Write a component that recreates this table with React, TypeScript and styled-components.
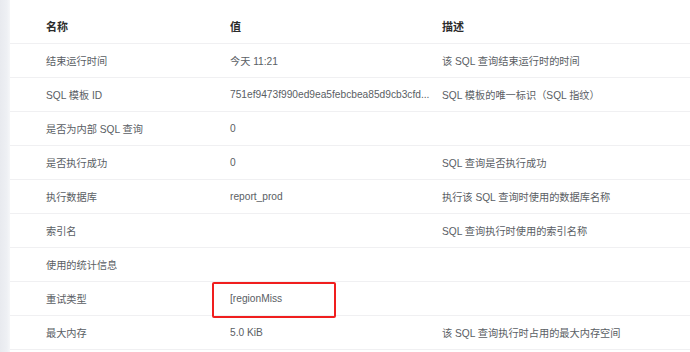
import React from "react";
import styled, { createGlobalStyle } from "styled-components";

const Global = createGlobalStyle`
  html, body { margin: 0; padding: 0; background: #ffffff; }
  body {
    font-family: "Liberation Sans", "Noto Sans CJK SC", sans-serif;
    width: 690px; height: 352px; overflow: hidden;
  }
`;

const Page = styled.div`
  display: flex;
  width: 690px;
  height: 352px;
  background: #ffffff;
`;

const SideStrip = styled.div`
  width: 10px;
  flex: none;
  background: linear-gradient(to right, #e8eaef 0%, #eef0f4 70%, #f6f7f9 100%);
`;

const Panel = styled.div`
  flex: 1;
  display: flex;
  flex-direction: column;
  padding-top: 8px;
  background: #ffffff;
`;

const Row = styled.div<{ $head?: boolean }>`
  display: grid;
  grid-template-columns: 184px 212px 1fr;
  padding-left: 20px;
  height: ${(p) => (p.$head ? 35 : 33)}px;
  align-items: center;
  border-bottom: 1px solid #f0f0f2;
  flex: none;
`;

const Cell = styled.div<{ $head?: boolean }>`
  position: relative;
  height: 100%;
  display: flex;
  align-items: center;
  padding-left: 16px;
  font-size: ${(p) => (p.$head ? "11px" : "10.2px")};
  font-weight: ${(p) => (p.$head ? 700 : 400)};
  color: ${(p) => (p.$head ? "#2b2b2b" : "#5a5e64")};
  white-space: nowrap;
  overflow: visible;
`;

const Highlight = styled.div`
  position: absolute;
  left: -2px;
  top: 0;
  width: 124px;
  height: 36px;
  box-sizing: border-box;
  border: 2px solid #f01e1e;
  border-radius: 2px;
  pointer-events: none;
`;

type Item = { name: string; value: string; desc: string; mark?: boolean };

const rows: Item[] = [
  { name: "结束运行时间", value: "今天 11:21", desc: "该 SQL 查询结束运行时的时间" },
  { name: "SQL 模板 ID", value: "751ef9473f990ed9ea5febcbea85d9cb3cfd...", desc: "SQL 模板的唯一标识（SQL 指纹）" },
  { name: "是否为内部 SQL 查询", value: "0", desc: "" },
  { name: "是否执行成功", value: "0", desc: "SQL 查询是否执行成功" },
  { name: "执行数据库", value: "report_prod", desc: "执行该 SQL 查询时使用的数据库名称" },
  { name: "索引名", value: "", desc: "SQL 查询执行时使用的索引名称" },
  { name: "使用的统计信息", value: "", desc: "" },
  { name: "重试类型", value: "[regionMiss", desc: "", mark: true },
  { name: "最大内存", value: "5.0 KiB", desc: "该 SQL 查询执行时占用的最大内存空间" },
];

export default function App() {
  return (
    <>
      <Global />
      <Page>
        <SideStrip />
        <Panel>
          <Row $head>
            <Cell $head>名称</Cell>
            <Cell $head>值</Cell>
            <Cell $head>描述</Cell>
          </Row>
          {rows.map((r) => (
            <Row key={r.name}>
              <Cell>{r.name}</Cell>
              <Cell>
                {r.value}
                {r.mark && <Highlight />}
              </Cell>
              <Cell>{r.desc}</Cell>
            </Row>
          ))}
        </Panel>
      </Page>
    </>
  );
}
